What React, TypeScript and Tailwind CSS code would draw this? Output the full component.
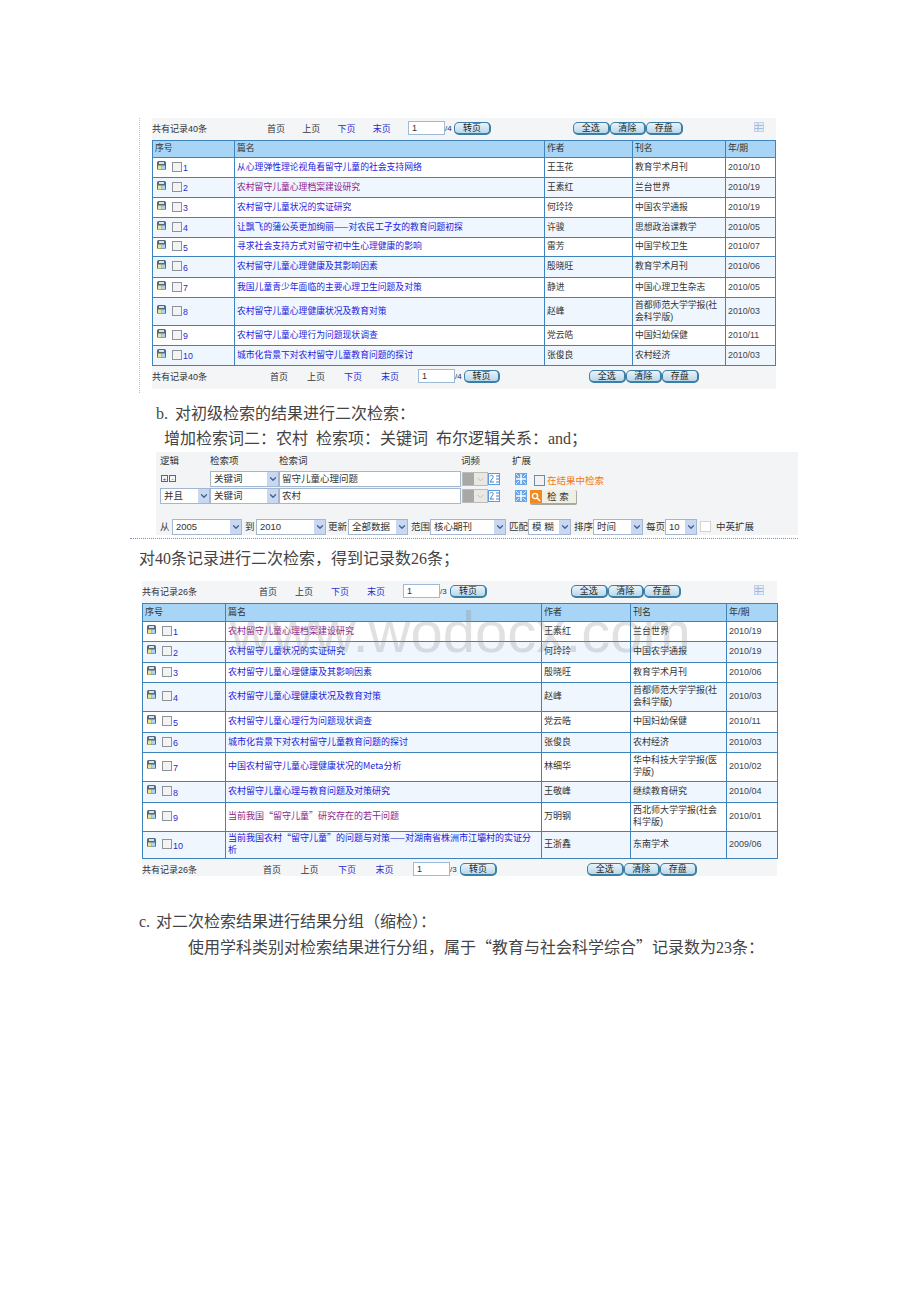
import { ChevronDown } from "lucide-react";

const SANS = "font-['Liberation_Sans','Noto_Sans_CJK_SC',sans-serif]";
const SERIF = "font-['Liberation_Serif','Noto_Sans_CJK_SC',serif]";

type Row = { title: string; author: string; journal: string; issue: string; height: string; visited?: boolean };

const FIRST_ROWS: Row[] = [
  { title: "从心理弹性理论视角看留守儿童的社会支持网络", author: "王玉花", journal: "教育学术月刊", issue: "2010/10", height: "h-[20px]" },
  { title: "农村留守儿童心理档案建设研究", author: "王素红", journal: "兰台世界", issue: "2010/19", height: "h-[20px]", visited: true },
  { title: "农村留守儿童状况的实证研究", author: "何玲玲", journal: "中国农学通报", issue: "2010/19", height: "h-[20px]" },
  { title: "让飘飞的蒲公英更加绚丽——对农民工子女的教育问题初探", author: "许骏", journal: "思想政治课教学", issue: "2010/05", height: "h-[20px]" },
  { title: "寻求社会支持方式对留守初中生心理健康的影响", author: "雷芳", journal: "中国学校卫生", issue: "2010/07", height: "h-[19px]" },
  { title: "农村留守儿童心理健康及其影响因素", author: "殷晓旺", journal: "教育学术月刊", issue: "2010/06", height: "h-[21px]" },
  { title: "我国儿童青少年面临的主要心理卫生问题及对策", author: "静进", journal: "中国心理卫生杂志", issue: "2010/05", height: "h-[20px]" },
  { title: "农村留守儿童心理健康状况及教育对策", author: "赵峰", journal: "首都师范大学学报(社会科学版)", issue: "2010/03", height: "h-[28px]" },
  { title: "农村留守儿童心理行为问题现状调查", author: "党云皓", journal: "中国妇幼保健", issue: "2010/11", height: "h-[20px]" },
  { title: "城市化背景下对农村留守儿童教育问题的探讨", author: "张俊良", journal: "农村经济", issue: "2010/03", height: "h-[20px]" },
];

const SECOND_ROWS: Row[] = [
  { title: "农村留守儿童心理档案建设研究", author: "王素红", journal: "兰台世界", issue: "2010/19", height: "h-[20px]", visited: true },
  { title: "农村留守儿童状况的实证研究", author: "何玲玲", journal: "中国农学通报", issue: "2010/19", height: "h-[21px]" },
  { title: "农村留守儿童心理健康及其影响因素", author: "殷晓旺", journal: "教育学术月刊", issue: "2010/06", height: "h-[20px]" },
  { title: "农村留守儿童心理健康状况及教育对策", author: "赵峰", journal: "首都师范大学学报(社会科学版)", issue: "2010/03", height: "h-[29px]" },
  { title: "农村留守儿童心理行为问题现状调查", author: "党云皓", journal: "中国妇幼保健", issue: "2010/11", height: "h-[21px]" },
  { title: "城市化背景下对农村留守儿童教育问题的探讨", author: "张俊良", journal: "农村经济", issue: "2010/03", height: "h-[20px]" },
  { title: "中国农村留守儿童心理健康状况的Meta分析", author: "林细华", journal: "华中科技大学学报(医学版)", issue: "2010/02", height: "h-[29px]" },
  { title: "农村留守儿童心理与教育问题及对策研究", author: "王敬峰", journal: "继续教育研究", issue: "2010/04", height: "h-[21px]" },
  { title: "当前我国“留守儿童”研究存在的若干问题", author: "万明钢", journal: "西北师大学学报(社会科学版)", issue: "2010/01", height: "h-[29px]", visited: true },
  { title: "当前我国农村“留守儿童”的问题与对策——对湖南省株洲市江壩村的实证分析", author: "王浙鑫", journal: "东南学术", issue: "2009/06", height: "h-[26px]" },
];

function DiskIcon() {
  return (
    <svg width="9" height="9" viewBox="0 0 9 9" className="mb-[3px] shrink-0">
      <rect width="9" height="9" rx="1.5" fill="#566a7d" />
      <rect x="2" y="1" width="5" height="2" fill="#d5e3ef" />
      <rect x="1" y="4.5" width="3.5" height="4" fill="#efe58c" />
      <rect x="4.5" y="4.5" width="3.5" height="4" fill="#a9d5ee" />
    </svg>
  );
}

function ListIcon() {
  return (
    <svg width="10" height="10" viewBox="0 0 10 10" className="shrink-0">
      <rect x="0.5" y="0.5" width="9" height="9" fill="#e6edf8" stroke="#c3d1e8" />
      <path d="M1 3.5h8M1 6.5h8M4 1v2M4 4v2M4 7v2" stroke="#a5b9dc" />
    </svg>
  );
}

function PagerButton({ label, className }: { label: string; className: string }) {
  return (
    <span
      className={`flex h-[13px] items-center justify-center rounded-[5px] border border-[#3b7ea6] border-r-2 border-b-2 bg-gradient-to-b from-[#eaf3f9] to-[#b9d8ea] text-[9px] leading-none text-[#222] ${className}`}
    >
      {label}
    </span>
  );
}

function Toolbar({
  total,
  pages,
  height,
  pagerGap,
  step,
  slashWidth,
  jumpWidth,
  toolsGap,
  iconGap,
}: {
  total: number;
  pages: number;
  height: string;
  pagerGap: string;
  step: string;
  slashWidth: string;
  jumpWidth: string;
  toolsGap: string;
  iconGap?: string;
}) {
  return (
    <div className={`flex items-start overflow-hidden pt-[4px] text-[9px] leading-[14px] text-[#333] ${height}`}>
      <span className="w-[100px] shrink-0">共有记录{total}条</span>
      <div className={`flex shrink-0 ${pagerGap}`}>
        <span className={step}>首页</span>
        <span className={step}>上页</span>
        <span className={`text-[#2a2ad0] ${step}`}>下页</span>
        <span className={`text-[#2a2ad0] ${step}`}>末页</span>
      </div>
      <span className="-mt-px h-[14px] w-[37px] shrink-0 border border-[#9dbbd6] bg-white pl-[3px] leading-[12px]">1</span>
      <span className={`shrink-0 text-[8px] ${slashWidth}`}>/{pages}</span>
      <PagerButton label="转页" className={`shrink-0 ${jumpWidth}`} />
      <div className={`flex shrink-0 ${toolsGap}`}>
        <PagerButton label="全选" className="w-[36.5px]" />
        <PagerButton label="清除" className="w-[36.5px]" />
        <PagerButton label="存盘" className="w-[36.5px]" />
      </div>
      {iconGap && (
        <div className={`shrink-0 ${iconGap}`}>
          <ListIcon />
        </div>
      )}
    </div>
  );
}

function ResultTable({
  rows,
  widths,
  fontSize,
  headHeight,
}: {
  rows: Row[];
  widths: string[];
  fontSize: string;
  headHeight: string;
}) {
  const cell = "border border-[#3f83bd] px-[2px] pb-[2px] align-middle";
  return (
    <table className={`w-full table-fixed border-collapse leading-[12px] text-[#333] ${fontSize}`}>
      <thead>
        <tr className={`bg-[#a8d5f5] ${headHeight}`}>
          {["序号", "篇名", "作者", "刊名", "年/期"].map((name, index) => (
            <th key={name} className={`${cell} text-left font-normal ${widths[index]}`}>
              {name}
            </th>
          ))}
        </tr>
      </thead>
      <tbody>
        {rows.map((row, index) => (
          <tr key={row.title} className={`${row.height} ${index % 2 === 1 ? "bg-[#eff6fe]" : "bg-white"}`}>
            <td className={cell}>
              <div className="flex items-center pl-[2px]">
                <DiskIcon />
                <span className="ml-[6px] h-[10px] w-[10px] shrink-0 border border-[#8d9499] bg-[#f3f3f3]" />
                <span className="ml-[1px] mt-[3px] text-[#2a2ad0]">{index + 1}</span>
              </div>
            </td>
            <td className={`${cell} font-['Noto_Sans_CJK_SC',sans-serif] ${row.visited ? "text-[#8c1c8c]" : "text-[#2222dd]"}`}>
              {row.title}
            </td>
            <td className={cell}>{row.author}</td>
            <td className={cell}>{row.journal}</td>
            <td className={`${cell} text-[#444]`}>{row.issue}</td>
          </tr>
        ))}
      </tbody>
    </table>
  );
}

function Dropdown({ label, className, dim }: { label: string; className: string; dim?: boolean }) {
  return (
    <span
      className={`flex h-[16px] shrink-0 items-center justify-between border border-[#a3b8d0] bg-white pl-[3px] leading-none text-[#333] ${className}`}
    >
      {label}
      <span className={`flex h-full w-[11px] items-center justify-center ${dim ? "bg-[#e9e8e2]" : "bg-[#c9d8f0]"}`}>
        <ChevronDown size={10} strokeWidth={3} className={dim ? "text-[#b5b5b0]" : "text-[#3d5f94]"} />
      </span>
    </span>
  );
}

function FrequencyControl() {
  return (
    <div className="ml-px flex shrink-0 items-center">
      <span className="flex h-[14px] w-[26px] border border-[#bdbdb5] bg-[#e9e8e2]">
        <span className="h-full w-[11px] bg-[#a8a8a8]" />
        <ChevronDown size={11} strokeWidth={2} className="ml-px mt-px text-[#bcbcb6]" />
      </span>
      <svg width="12" height="12" viewBox="0 0 12 12" className="shrink-0">
        <rect x="0.5" y="0.5" width="11" height="11" fill="#fff" stroke="#5d9ae0" />
        <path d="M2 3.5c1-2 4-1 3 1L2 9h4M8 3h3M8 6h3M8 9h3" fill="none" stroke="#3f7fd0" />
      </svg>
    </div>
  );
}

function ExpandIcon() {
  return (
    <svg width="12" height="12" viewBox="0 0 12 12" className="shrink-0">
      <rect width="12" height="12" fill="#6aa6e8" />
      <path d="M6 1v10M1 6h10" stroke="#fff" strokeWidth="1.5" />
      <path d="M1 1l3 3M11 1L8 4M1 11l3-3M11 11L8 8" stroke="#dcecff" />
    </svg>
  );
}

function ToggleBox({ sign }: { sign: string }) {
  return (
    <span className="flex h-[7px] w-[7px] items-center justify-center border border-[#666] text-[6px] leading-none text-[#333]">
      {sign}
    </span>
  );
}

function SearchPanel() {
  return (
    <div className={`ml-[156px] flex h-[83px] w-[642px] flex-col bg-[#f3f4f6] pl-[4px] text-[9.5px] leading-none text-[#333] ${SANS}`}>
      <div className="flex h-[18px] shrink-0 items-center">
        <span className="w-[50px]">逻辑</span>
        <span className="w-[69px]">检索项</span>
        <span className="w-[182px]">检索词</span>
        <span className="w-[51px]">词频</span>
        <span>扩展</span>
      </div>
      <div className="flex h-[17px] shrink-0 items-center">
        <div className="flex w-[50px] gap-[1px] pl-[1px]">
          <ToggleBox sign="+" />
          <ToggleBox sign="-" />
        </div>
        <Dropdown label="关键词" className="w-[69px]" />
        <span className="flex h-[16px] w-[182px] shrink-0 items-center border border-[#a3b8d0] bg-white pl-[2px]">留守儿童心理问题</span>
        <FrequencyControl />
        <div className="ml-[15px]">
          <ExpandIcon />
        </div>
        <span className="ml-[7px] mt-[4px] h-[11px] w-[11px] shrink-0 border border-[#6f8aa8] bg-[#f2f2f2]" />
        <span className="ml-[2px] mt-[4px] text-[#f07a1a]">在结果中检索</span>
      </div>
      <div className="flex h-[17px] shrink-0 items-center">
        <Dropdown label="并且" className="w-[50px]" />
        <Dropdown label="关键词" className="w-[69px]" />
        <span className="flex h-[16px] w-[182px] shrink-0 items-center border border-[#a3b8d0] bg-white pl-[2px]">农村</span>
        <FrequencyControl />
        <div className="ml-[15px]">
          <ExpandIcon />
        </div>
        <span className="ml-[3px] mt-[4px] flex h-[15px] w-[47px] shrink-0 items-center rounded-[2px] border-b-2 border-r border-[#a9a9a0] bg-[#f0efe4]">
          <span className="flex h-full w-[12px] shrink-0 items-center justify-center bg-[#f08a1e]">
            <svg width="10" height="10" viewBox="0 0 10 10">
              <circle cx="4" cy="4" r="2.6" fill="none" stroke="#fff" strokeWidth="1.4" />
              <path d="M6 6l3 3" stroke="#fff" strokeWidth="1.6" />
            </svg>
          </span>
          <span className="ml-[5px] whitespace-pre">检 索</span>
        </span>
      </div>
      <div className="mt-[14px] flex h-[17px] shrink-0 items-center">
        <span className="w-[12px] shrink-0">从</span>
        <Dropdown label="2005" className="w-[70px]" />
        <span className="w-[14px] shrink-0 pl-[3px]">到</span>
        <Dropdown label="2010" className="w-[70px]" />
        <span className="w-[22px] shrink-0 pl-[2px]">更新</span>
        <Dropdown label="全部数据" className="w-[60px]" />
        <span className="w-[22px] shrink-0 pl-[3px]">范围</span>
        <Dropdown label="核心期刊" className="w-[76px]" />
        <span className="w-[22px] shrink-0 pl-[3px]">匹配</span>
        <Dropdown label="模 糊" className="w-[43px]" />
        <span className="w-[22px] shrink-0 pl-[3px]">排序</span>
        <Dropdown label="时间" className="w-[50px]" />
        <span className="w-[22px] shrink-0 pl-[3px]">每页</span>
        <Dropdown label="10" className="w-[32px]" />
        <span className="ml-[3px] h-[11px] w-[11px] shrink-0 border border-[#d4d4cc] bg-white" />
        <span className="ml-[5px]">中英扩展</span>
      </div>
    </div>
  );
}

export default function App() {
  return (
    <div className={`relative min-h-[1302px] w-[920px] bg-white pt-[118px] ${SERIF} text-[16px] leading-[24px] text-[#444]`}>
      <section className="ml-[139px] w-[637px] border-l border-dotted border-[#a9c8e0] pb-[4px] pl-[12px]">
        <div className={`bg-[#f4f5f7] ${SANS}`}>
          <Toolbar
            total={40}
            pages={4}
            height="h-[22px]"
            pagerGap="ml-[15px]"
            step="w-[35.25px]"
            slashWidth="w-[9px]"
            jumpWidth="w-[37px]"
            toolsGap="ml-[82px]"
            iconGap="ml-[71px]"
          />
          <div className="w-[623px]">
            <ResultTable
              rows={FIRST_ROWS}
              widths={["w-[82px]", "w-[310px]", "w-[88px]", "w-[93px]", "w-[50px]"]}
              fontSize="text-[8.8px]"
              headHeight="h-[17px]"
            />
          </div>
          <Toolbar
            total={40}
            pages={4}
            height="h-[23px]"
            pagerGap="ml-[18px]"
            step="w-[37px]"
            slashWidth="w-[9px]"
            jumpWidth="w-[36px]"
            toolsGap="ml-[89px]"
          />
        </div>
      </section>

      <p className="ml-[156px] mt-[9px]">
        <span className="inline-block w-[19px]">b.</span>
        {"对初级检索的结果进行二次检索\uFF1A"}
      </p>
      <p className="ml-[164px] mt-px whitespace-pre">{"增加检索词二\uFF1A农村  检索项\uFF1A关键词  布尔逻辑关系\uFF1Aand\uFF1B"}</p>
      <div className="mt-px">
        <SearchPanel />
      </div>
      <div className="ml-[130px] mt-[3px] w-[668px] border-t border-dotted border-[#7a8fd0]" />
      <p className="ml-[139px] mt-[8px]">{"对40条记录进行二次检索\uFF0C得到记录数26条\uFF1B"}</p>

      <section className={`relative ml-[142px] mt-[10px] w-[635px] bg-[#f4f5f7] ${SANS}`}>
        <Toolbar
          total={26}
          pages={3}
          height="h-[22px]"
          pagerGap="ml-[17px]"
          step="w-[36px]"
          slashWidth="w-[10px]"
          jumpWidth="w-[37px]"
          toolsGap="ml-[84px]"
          iconGap="ml-[73px]"
        />
        <ResultTable
          rows={SECOND_ROWS}
          widths={["w-[83px]", "w-[316px]", "w-[89px]", "w-[96px]", "w-[51px]"]}
          fontSize="text-[9px]"
          headHeight="h-[18px]"
        />
        <Toolbar
          total={26}
          pages={3}
          height="h-[17px]"
          pagerGap="ml-[21px]"
          step="w-[37.5px]"
          slashWidth="w-[10px]"
          jumpWidth="w-[37px]"
          toolsGap="ml-[90px]"
        />
        <span className="pointer-events-none absolute left-[88px] top-[18px] whitespace-nowrap text-[58px] leading-[66px] text-[#888]/25">
          www.wodocx.com
        </span>
      </section>

      <p className="ml-[139px] mt-[34px]">
        <span className="inline-block w-[17px]">c.</span>
        {"对二次检索结果进行结果分组\uFF08缩检\uFF09\uFF1A"}
      </p>
      <p className="ml-[188px]">
        {"使用学科类别对检索结果进行分组\uFF0C属于"}
        <span className="font-['Noto_Sans_CJK_SC',sans-serif]">{"\u201C"}</span>
        教育与社会科学综合
        <span className="font-['Noto_Sans_CJK_SC',sans-serif]">{"\u201D"}</span>
        {"记录数为23条\uFF1A"}
      </p>
    </div>
  );
}
